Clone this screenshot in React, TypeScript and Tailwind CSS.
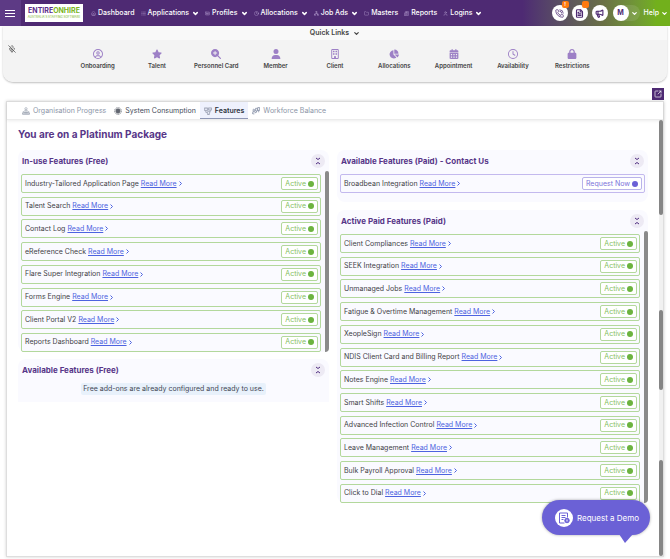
import React from "react";
import {
  FaRegCircleUser,
  FaStar,
  FaMagnifyingGlassPlus,
  FaUser,
  FaRegBuilding,
  FaChartPie,
  FaCalendarDays,
  FaRegClock,
  FaLock,
} from "react-icons/fa6";
import {
  ChevronDown,
  House,
  List,
  IdCard,
  Clock,
  Network,
  Folder,
  Newspaper,
  User,
  PhoneCall,
  FileText,
  Megaphone,
  SquareArrowOutUpRight,
  MicOff,
} from "lucide-react";

type IconType = React.ComponentType<{ className?: string; strokeWidth?: number }>;

const navItems: { label: string; icon: IconType; menu: boolean }[] = [
  { label: "Dashboard", icon: House, menu: false },
  { label: "Applications", icon: List, menu: true },
  { label: "Profiles", icon: IdCard, menu: true },
  { label: "Allocations", icon: Clock, menu: true },
  { label: "Job Ads", icon: Network, menu: true },
  { label: "Masters", icon: Folder, menu: false },
  { label: "Reports", icon: Newspaper, menu: false },
  { label: "Logins", icon: User, menu: true },
];

const quickLinks: { label: string; icon: IconType }[] = [
  { label: "Onboarding", icon: FaRegCircleUser },
  { label: "Talent", icon: FaStar },
  { label: "Personnel Card", icon: FaMagnifyingGlassPlus },
  { label: "Member", icon: FaUser },
  { label: "Client", icon: FaRegBuilding },
  { label: "Allocations", icon: FaChartPie },
  { label: "Appointment", icon: FaCalendarDays },
  { label: "Availability", icon: FaRegClock },
  { label: "Restrictions", icon: FaLock },
];

const freeFeatures = [
  "Industry-Tailored Application Page",
  "Talent Search",
  "Contact Log",
  "eReference Check",
  "Flare Super Integration",
  "Forms Engine",
  "Client Portal V2",
  "Reports Dashboard",
];

const paidFeatures = [
  "Client Compliances",
  "SEEK Integration",
  "Unmanaged Jobs",
  "Fatigue & Overtime Management",
  "XeopleSign",
  "NDIS Client Card and Billing Report",
  "Notes Engine",
  "Smart Shifts",
  "Advanced Infection Control",
  "Leave Management",
  "Bulk Payroll Approval",
  "Click to Dial",
];

function Logo() {
  return (
    <a
      href="#home"
      className="ml-1 flex h-[18px] w-[58px] flex-col items-center justify-center bg-white whitespace-nowrap"
    >
      <span className="text-[7px] leading-[8px] font-bold text-[#5b2d8a]">
        ENTIRE<span className="text-[#7ab51d]">ONHIRE</span>
      </span>
      <span className="text-[3px] leading-[5px] font-medium text-[#8fc04a]">
        AUSTRALIA'S STAFFING SOFTWARE
      </span>
    </a>
  );
}

function RoundButton({
  label,
  badge,
  children,
}: {
  label: string;
  badge?: string;
  children: React.ReactNode;
}) {
  return (
    <button
      aria-label={label}
      className="relative flex size-4 items-center justify-center rounded-full bg-white text-[#4e2a73]"
    >
      {children}
      {badge !== undefined && (
        <span className="absolute -top-1 -right-px flex h-[7px] w-[7px] items-center justify-center rounded-[2px] bg-[#ff7a0f] text-[5px] leading-none font-bold text-white">
          {badge}
        </span>
      )}
    </button>
  );
}

function Header() {
  return (
    <header className="flex h-[26px] items-center bg-linear-to-r from-[#4e2a73] from-78% via-[#6a7045] via-90% to-[#72b01c] to-98% text-white">
      <button
        aria-label="Menu"
        className="flex h-full w-[21px] items-center justify-center bg-[#5d3a85] pr-px"
      >
        <svg viewBox="0 0 10 8" className="h-2 w-[10px]" fill="#fff">
          <path d="M0 1h10v1H0zM0 4h10v1H0zM0 7h10v1H0z" />
        </svg>
      </button>
      <Logo />
      <nav className="ml-2 flex items-center gap-[6px]">
        {navItems.map(({ label, icon: Icon, menu }) => (
          <a
            key={label}
            href="#nav"
            className="flex items-center text-[7px] leading-[10px] font-medium whitespace-nowrap"
          >
            <Icon className="mr-[2px] size-[5px] text-[#b9a3d3]" strokeWidth={2} />
            {label}
            {menu && <ChevronDown className="ml-[3px] size-[7px]" strokeWidth={5} />}
          </a>
        ))}
      </nav>
      <div className="ml-auto flex items-center gap-1 pr-[2px]">
        <RoundButton label="Calls" badge="!">
          <PhoneCall className="size-[9px]" strokeWidth={2} />
        </RoundButton>
        <RoundButton label="Documents" badge="">
          <FileText className="size-[9px]" strokeWidth={3} />
        </RoundButton>
        <RoundButton label="Announcements">
          <Megaphone className="size-[9px]" strokeWidth={3} />
        </RoundButton>
        <button className="ml-px flex items-center rounded-full bg-white/10 pr-[2px]">
          <span className="flex size-4 items-center justify-center rounded-full bg-white text-[7px] font-bold text-[#4e2a73]">
            M
          </span>
          <ChevronDown className="ml-[2px] size-[7px]" strokeWidth={4} />
        </button>
        <button className="flex items-center text-[7px] leading-[10px] font-medium">
          Help
          <ChevronDown className="ml-[2px] size-[7px]" strokeWidth={4} />
        </button>
      </div>
    </header>
  );
}

function QuickLinks() {
  return (
    <section className="mx-[3px] overflow-hidden rounded-b-[10px] bg-[#f9f9f9] shadow-[0_1px_2px_rgba(0,0,0,0.25)]">
      <div className="flex h-[14px] items-end justify-center pb-[2px]">
        <button className="flex items-center gap-1 text-[7px] leading-[10px] font-semibold text-[#444]">
          Quick Links
          <ChevronDown className="size-[7px]" strokeWidth={4} />
        </button>
      </div>
      <div className="flex h-[42px] items-start bg-[#f3f3f3] pt-[5px]">
        <button aria-label="Microphone" className="ml-[5px] w-2 text-[#444]">
          <MicOff className="size-2" strokeWidth={2} />
        </button>
        <nav className="mr-[65px] ml-[52px] grid flex-1 grid-cols-9 pt-1">
          {quickLinks.map(({ label, icon: Icon }) => (
            <a
              key={label}
              href="#quick"
              className="flex flex-col items-center gap-[3px] text-[6px] leading-[8px] font-semibold whitespace-nowrap text-[#444]"
            >
              <Icon className="size-[10px] text-[#9d80c6]" />
              {label}
            </a>
          ))}
        </nav>
      </div>
    </section>
  );
}

function ProgressIcon() {
  return (
    <svg viewBox="0 0 18 18" className="size-2" fill="none" stroke="#8d97a6" strokeWidth="1.3">
      <circle cx="9" cy="4" r="2.6" />
      <path d="M5 10c0-4 8-4 8 0M3 9v4M15 9v4M1 16h16M1 13h16v3H1zM6 11h6v2H6z" />
    </svg>
  );
}

function ConsumptionIcon() {
  return (
    <svg viewBox="0 0 18 18" className="size-2" fill="none" stroke="#6a6e78">
      <circle cx="9" cy="9" r="7.6" strokeWidth="1.8" strokeDasharray="3 1.2" />
      <circle cx="9" cy="9" r="4.8" fill="#747985" stroke="#4b4f58" strokeWidth="1.6" />
      <path d="M6 9h6M9 6v6" stroke="#4b4f58" strokeWidth="1.2" />
    </svg>
  );
}

function FeaturesIcon() {
  return (
    <svg viewBox="0 0 18 18" className="size-2" fill="none" stroke="#858ca0" strokeWidth="1.4">
      <path d="M1 2h7v6H1zM3 4h3M10 2h7v5h-7zM12 4.500h3M4 8v4h4M14 7v4h-3" />
      <circle cx="10" cy="13" r="3" />
      <path d="M7 17h6" />
    </svg>
  );
}

function BalanceIcon() {
  return (
    <svg viewBox="0 0 18 18" className="size-2" fill="none" stroke="#74809a" strokeWidth="1.5">
      <circle cx="4" cy="7" r="2" />
      <path d="M1 16v-4c0-3 6-3 6 0v1l3-1M4 12v5M8 3h4v6H8zM13 1h4v7h-4zM10 9v3M15 8v4" />
    </svg>
  );
}

const tabs: { label: string; icon: () => React.JSX.Element; style: string }[] = [
  { label: "Organisation Progress", icon: ProgressIcon, style: "border-transparent text-[#8b95a7]" },
  { label: "System Consumption", icon: ConsumptionIcon, style: "border-transparent text-[#444b58]" },
  {
    label: "Features",
    icon: FeaturesIcon,
    style: "border-[#8d96b5] bg-[#eef1fd] font-semibold text-[#2f3440]",
  },
  { label: "Workforce Balance", icon: BalanceIcon, style: "border-transparent text-[#8b95a7]" },
];

function Tabs() {
  return (
    <div
      role="tablist"
      className="flex h-[18px] items-stretch border-b border-[#ececec] pl-[11px] shadow-[0_1px_3px_rgba(0,0,0,0.08)]"
    >
      {tabs.map(({ label, icon: Icon, style }) => (
        <button
          key={label}
          role="tab"
          aria-selected={label === "Features"}
          className={`flex items-center gap-[3px] border-b px-1 pt-[2px] text-[7px] leading-[10px] whitespace-nowrap ${style}`}
        >
          <Icon />
          {label}
        </button>
      ))}
    </div>
  );
}

function CardHeader({ title }: { title: string }) {
  return (
    <div className="flex h-[21px] items-center justify-between pr-1 pl-1">
      <h2 className="text-[8px] leading-[12px] font-bold text-[#573688]">{title}</h2>
      <button
        aria-label={`Collapse ${title}`}
        className="flex size-[14px] items-center justify-center rounded-full bg-[#edeaf4]"
      >
        <svg viewBox="0 0 6 8" className="h-2 w-[6px]" fill="none" stroke="#4f2d80" strokeWidth="1">
          <path d="M1 1l2 1.500 2-1.500M1 7l2-1.500 2 1.500" />
        </svg>
      </button>
    </div>
  );
}

function FeatureRow({ name, request = false }: { name: string; request?: boolean }) {
  return (
    <li
      className={`flex h-[19px] items-center justify-between rounded-[2px] border pr-[2px] pl-[3px] text-[7px] leading-[10px] whitespace-nowrap ${
        request ? "border-[#c3b9ee]" : "border-[#b3d89c]"
      }`}
    >
      <span className="flex items-center text-[#3f3f46]">
        {name}
        <a href="#more" className="ml-[2px] flex items-center gap-[2px] text-[#4d63e0]">
          <span className="underline">Read More</span>
          <svg viewBox="0 0 3 5" className="h-[5px] w-[3px]" fill="none" stroke="#4d63e0">
            <path d="M.5.5l2 2-2 2" />
          </svg>
        </a>
      </span>
      <button
        className={`flex h-[13px] items-center gap-[2px] rounded-[2px] border bg-white px-[3px] ${
          request ? "border-[#b9b3ea] text-[#7d74da]" : "border-[#b3d89c] text-[#85c062]"
        }`}
      >
        {request ? "Request Now" : "Active"}
        <span
          className={`size-[6px] rounded-full ${request ? "bg-[#6b60d6]" : "bg-[#6cb33f]"}`}
        />
      </button>
    </li>
  );
}

function FeatureList({ items, height }: { items: string[]; height: string }) {
  return (
    <div className="flex gap-1">
      <ul className={`flex flex-1 flex-col justify-between pt-[3px] pl-[3px] ${height}`}>
        {items.map((name) => (
          <FeatureRow key={name} name={name} />
        ))}
      </ul>
      <div className="w-1 rounded-t-[2px] rounded-br-[4px] bg-[#8a8a8a]" />
    </div>
  );
}

function RequestDemo() {
  return (
    <button className="absolute right-5 bottom-6 flex h-[35px] w-[108px] items-center gap-1 rounded-full bg-[#6b61d6] pl-[13px] text-[8px] whitespace-nowrap text-white shadow-[0_0_3px_rgba(0,0,0,0.35)]">
      <span className="flex size-[18px] shrink-0 items-center justify-center rounded-full bg-white">
        <svg viewBox="0 0 24 24" className="size-3" fill="none" stroke="#6b61d6" strokeWidth="2">
          <path d="M19 11V2H3v20h10M7 7h8M7 11h8M7 15h4" />
          <circle cx="18" cy="17" r="4.500" fill="#6b61d6" />
          <path d="M18 15v4" stroke="#fff" />
        </svg>
      </span>
      Request a Demo
      <svg viewBox="0 0 14 9" className="absolute top-[34px] right-[17px] h-[9px] w-[14px]">
        <path d="M0 0h14L6 9z" fill="#6b61d6" />
      </svg>
    </button>
  );
}

export default function App() {
  return (
    <div className="relative bg-white pb-[2px] font-['Inter','Liberation_Sans',sans-serif]">
      <Header />
      <QuickLinks />
      <div className="flex justify-end pt-[6px] pr-[6px] pb-px">
        <button
          aria-label="Open in new window"
          className="flex size-3 items-center justify-center bg-[#4e2a73] text-white"
        >
          <SquareArrowOutUpRight className="size-2" strokeWidth={2} />
        </button>
      </div>
      <main className="mx-[6px] border border-[#dedede] shadow-[0_0_3px_rgba(0,0,0,0.18)]">
        <Tabs />
        <div className="flex">
          <div className="flex-1 pr-[11px] pl-[11px]">
            <h1 className="pt-[7px] text-[10px] leading-[14px] font-bold text-[#573688]">
              You are on a Platinum Package
            </h1>
            <div className="mt-[9px] grid grid-cols-2 items-start gap-2">
              <div>
                <section className="rounded-lg bg-[#fafaff]">
                  <CardHeader title="In-use Features (Free)" />
                  <FeatureList items={freeFeatures} height="h-[181px]" />
                </section>
                <section className="mt-[7px] rounded-t-lg bg-[#fafaff] pb-[7px]">
                  <CardHeader title="Available Features (Free)" />
                  <p className="mx-auto mt-[3px] w-fit rounded-[2px] bg-[#e8f1fb] px-[2px] text-[7px] leading-[12px] text-[#3f4654]">
                    Free add-ons are already configured and ready to use.
                  </p>
                </section>
              </div>
              <div>
                <section className="rounded-lg bg-[#fafaff] pb-[9px]">
                  <CardHeader title="Available Features (Paid) - Contact Us" />
                  <ul className="pt-[3px] pr-[3px] pl-[3px]">
                    <FeatureRow name="Broadbean Integration" request />
                  </ul>
                </section>
                <section className="mt-2 rounded-lg bg-[#fafaff]">
                  <CardHeader title="Active Paid Features (Paid)" />
                  <FeatureList items={paidFeatures} height="h-[272px]" />
                </section>
              </div>
            </div>
            <div className="h-[53px]" />
          </div>
          <div className="flex w-1 flex-col justify-between bg-[#f1f1f1]">
            <div className="h-[95px] rounded-[2px] bg-[#858585]" />
            <div className="mt-6 h-[80px] rounded-[2px] bg-[#858585]" />
            <div className="h-[96px] rounded-[2px] bg-[#858585]" />
          </div>
        </div>
      </main>
      <RequestDemo />
    </div>
  );
}
